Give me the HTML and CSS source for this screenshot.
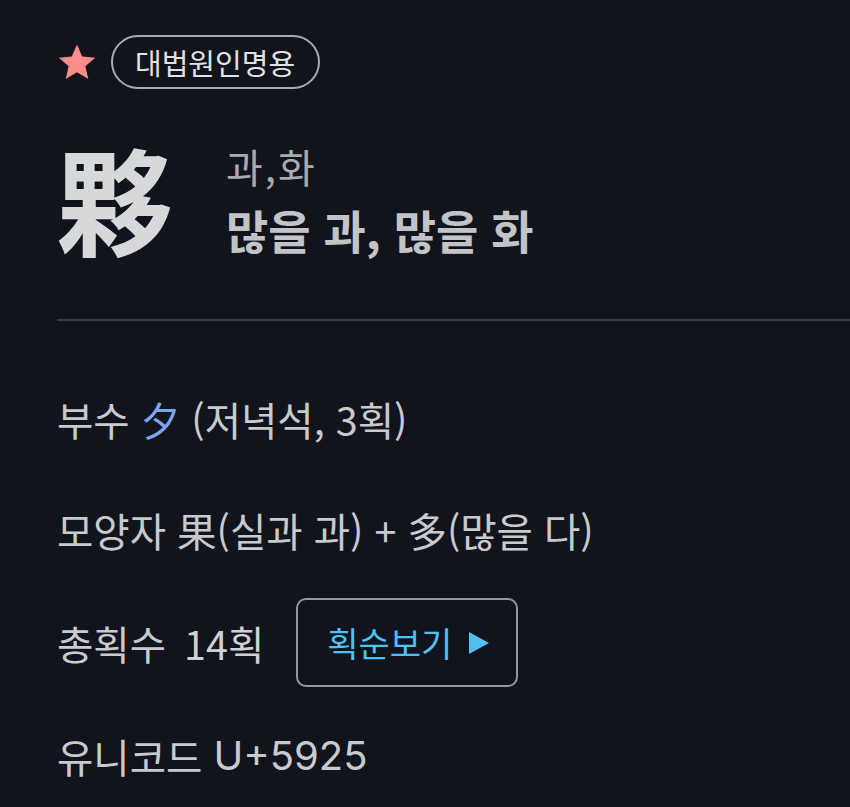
FILE: index.html
```html
<!DOCTYPE html>
<html lang="ko">
<head>
<meta charset="utf-8">
<link rel="stylesheet" href="styles.css">
</head>
<body>
<div class="page">
  <div class="top">
    <svg class="star" viewBox="0 0 24 24" width="40" height="40"><path d="M12 1.5l3.1 7.2 7.8.7-5.9 5.1 1.8 7.7L12 18.1 5.2 22.2l1.8-7.7L1.1 9.4l7.8-.7z" fill="#fd8d8b"/></svg>
    <span class="badge">대법원인명용</span>
  </div>
  <div class="head">
    <div class="hanja">夥</div>
    <div class="meaning">
      <div class="sound">과,화</div>
      <div class="mean">많을 과, 많을 화</div>
    </div>
  </div>
  <div class="divider"></div>
  <div class="rows">
    <div class="row">부수 <span class="radical">夕</span> (저녁석, 3획)</div>
    <div class="row">모양자 果(실과 과) + 多(많을 다)</div>
    <div class="row stroke">
      <span>총획수 <span class="count">14획</span></span>
      <button class="btn">획순보기<span class="tri"></span></button>
    </div>
    <div class="row">유니코드 <span class="code">U+5925</span></div>
  </div>
</div>
</body>
</html>
```

FILE: styles.css
```css
html, body {
  margin: 0;
  padding: 0;
  background: #11141c;
}
body {
  font-family: "Noto Sans CJK KR", "Noto Sans", sans-serif;
  color: #c9cacd;
  overflow: hidden;
}
.page {
  padding: 35px 0 0 57px;
}
.top {
  display: flex;
  align-items: center;
  gap: 14px;
}
.star {
  display: block;
}
.badge {
  display: inline-flex;
  align-items: center;
  height: 50px;
  padding: 0 23px 0 22px;
  border: 2px solid #a9abae;
  border-radius: 28px;
  font-size: 29px;
  color: #e1e2e4;
}
.head {
  display: flex;
  align-items: flex-start;
  margin-top: 42px;
  height: 187px;
}
.hanja {
  font-family: "Noto Sans CJK SC", "Noto Sans CJK KR", sans-serif;
  font-weight: 700;
  font-size: 116px;
  line-height: 130px;
  color: #d7d8da;
  width: 169px;
}
.meaning {
  padding-top: 12px;
}
.sound {
  font-size: 40px;
  line-height: 46px;
  letter-spacing: 2px;
  color: #a8aaae;
}
.mean {
  font-size: 46px;
  font-weight: 700;
  line-height: 60px;
  margin-top: 10px;
  color: #c2c4c8;
}
.divider {
  height: 2px;
  background: #393c44;
  margin-top: 1px;
}
.rows {
  display: flex;
  flex-direction: column;
}
.row {
  display: flex;
  align-items: center;
  font-size: 39.5px;
  height: 113px;
  white-space: pre;
}
.row:first-child {
  margin-top: 42px;
  height: 110px;
}
.radical {
  color: #7ea3ef;
}
.stroke {
  gap: 32px;
}
.count {
  margin-left: 7px;
  color: #d0d1d4;
}
.code {
  font-family: Inter, "Noto Sans CJK KR", sans-serif;
  font-size: 40px;
}
.btn {
  display: flex;
  align-items: center;
  gap: 17px;
  height: 89px;
  padding: 0 27px 0 29px;
  border: 2px solid #96989c;
  border-radius: 10px;
  background: transparent;
  font-family: inherit;
  font-size: 34px;
  color: #4fc0f0;
}
.tri {
  width: 0;
  height: 0;
  border-left: 20px solid #4fc0f0;
  border-top: 11px solid transparent;
  border-bottom: 11px solid transparent;
}
```
